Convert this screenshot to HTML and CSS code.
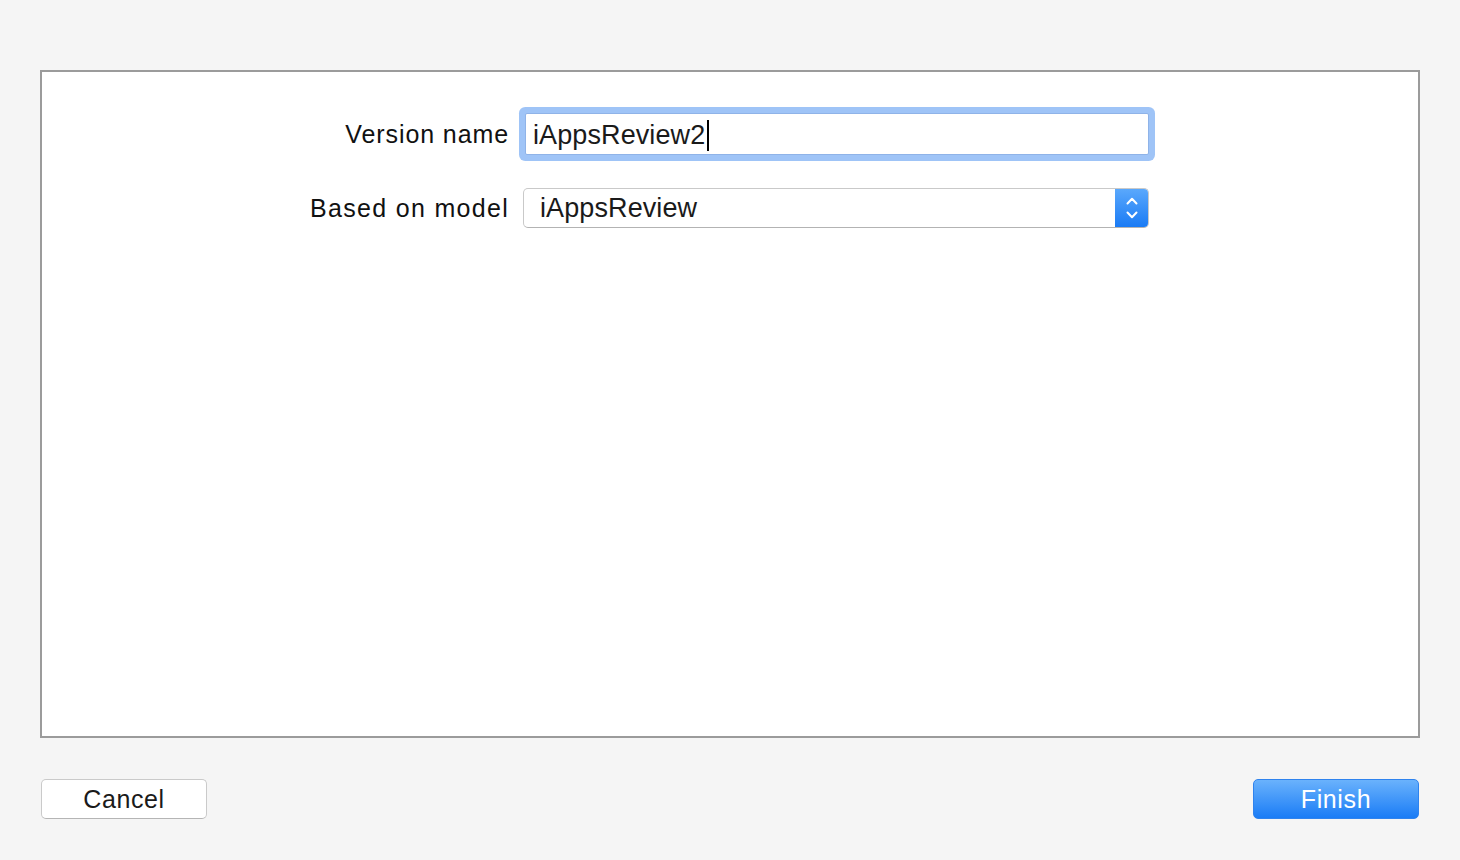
FILE: index.html
```html
<!DOCTYPE html>
<html lang="en">
<head>
  <meta charset="UTF-8" />
  <title>New Model Version</title>
  <link rel="stylesheet" href="styles.css">
</head>
<body>

  <div class="sheet">
    <div class="panel">
      <div class="form">
        <div class="label">Version name</div>
        <div class="text-field">
          <span class="field-value">iAppsReview2</span><span class="caret"></span>
        </div>

        <div class="label label-wide">Based on model</div>
        <div class="popup">
          <span class="popup-value">iAppsReview</span>
          <span class="stepper">
            <svg width="12" height="22" viewBox="0 0 12 22">
              <path d="M1.5 6.5 L6 1.8 L10.5 6.5" fill="none" stroke="#fff" stroke-width="2" stroke-linecap="round" stroke-linejoin="round"/>
              <path d="M1.5 15.5 L6 20.2 L10.5 15.5" fill="none" stroke="#fff" stroke-width="2" stroke-linecap="round" stroke-linejoin="round"/>
            </svg>
          </span>
        </div>
      </div>
    </div>

    <div class="footer">
      <button class="btn btn-cancel">Cancel</button>
      <button class="btn btn-finish">Finish</button>
    </div>
  </div>

</body>
</html>
```

FILE: styles.css
```css
* {
  margin: 0;
  padding: 0;
  box-sizing: border-box;
}
body {
  background: #f5f5f5;
  font-family: "Liberation Sans", Arial, Helvetica, sans-serif;
  color: #1a1a1a;
  height: 100vh;
}
.sheet {
  padding: 70px 40px 0 40px;
}
.panel {
  height: 668px;
  background: #fff;
  border: 2px solid #9b9b9b;
  padding-top: 41px;
}
.form {
  display: grid;
  grid-template-columns: 467px 626px;
  column-gap: 14px;
  row-gap: 33px;
  align-items: center;
}
.label {
  text-align: right;
  font-size: 25px;
  letter-spacing: 0.9px;
  color: #111;
}
.label-wide {
  letter-spacing: 1.3px;
}
.text-field {
  height: 42px;
  margin-left: 2px;
  width: 624px;
  background: #fff;
  border: 1px solid #8fb3e8;
  border-radius: 2px;
  box-shadow: 0 0 0 6px #9fc4f7;
  display: flex;
  align-items: center;
  padding: 2px 0 0 7px;
  font-size: 27px;
  letter-spacing: 0.1px;
}
.caret {
  display: inline-block;
  width: 2px;
  height: 31px;
  background: #000;
  margin-left: 2px;
}
.popup {
  height: 40px;
  border: 1px solid #c9c9c9;
  border-bottom-color: #b3b3b3;
  border-radius: 5px;
  background: #fff;
  display: flex;
  align-items: center;
  justify-content: space-between;
  overflow: hidden;
  font-size: 27px;
  letter-spacing: 0.1px;
}
.popup-value {
  padding-left: 16px;
}
.stepper {
  width: 33px;
  height: 100%;
  background: linear-gradient(to bottom, #5aa8fc, #1a7bf5);
  display: flex;
  align-items: center;
  justify-content: center;
}
.footer {
  display: flex;
  justify-content: space-between;
  margin-top: 41px;
  padding: 0 1px;
}
.btn {
  width: 166px;
  height: 40px;
  border-radius: 5px;
  font-family: "Liberation Sans", Arial, Helvetica, sans-serif;
  font-size: 25px;
  letter-spacing: 0.6px;
  cursor: pointer;
}
.btn-cancel {
  background: #fff;
  border: 1px solid #cacaca;
  border-bottom-color: #b5b5b5;
  color: #1a1a1a;
}
.btn-finish {
  background: linear-gradient(to bottom, #6ab2fc, #1a7cf6);
  border: 1px solid #2f83ee;
  color: #fff;
}
```
